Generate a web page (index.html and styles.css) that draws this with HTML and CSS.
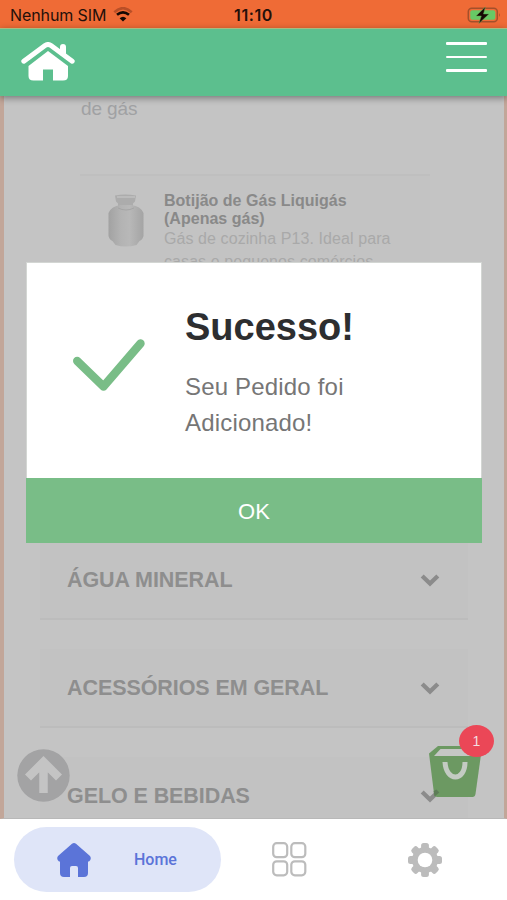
FILE: index.html
```html
<!DOCTYPE html>
<html lang="pt-BR">
<head>
<meta charset="utf-8">
<title>Pedido</title>
<link rel="stylesheet" href="styles.css">
</head>
<body>
<div class="screen">
  <div class="status">
    <div class="carrier"><span>Nenhum SIM</span>
      <svg width="20" height="16" viewBox="0 0 20 16"><path d="M1.300 5.200Q10-2.800 18.700 5.200" fill="none" stroke="#b94f27" stroke-width="2.600"/><path d="M4 7.800Q10 2.800 16 7.800" fill="none" stroke="#160904" stroke-width="2.700"/><path d="M6.600 11.200Q10 8.200 13.400 11.200L10 14.400Z" fill="#160904"/></svg>
    </div>
    <time class="clock">11:10</time>
    <svg class="battery" width="34" height="18" viewBox="0 0 34 18"><rect x="1.300" y="2.300" width="29" height="13.500" rx="3.500" fill="none" stroke="#a3502b" stroke-width="1.500"/><rect x="3.300" y="4.300" width="25" height="9.500" rx="2" fill="#67c965"/><path d="M32 7q1.700 2 0 4z" fill="#a3502b"/><path d="M18.300 1L9 10h5.300l-2.500 7.500L22 8h-5.500z" fill="#160904" stroke="#67a552" stroke-width=".5"/></svg>
  </div>

  <header class="header">
    <svg width="54" height="40" viewBox="0 0 54 40"><path d="M7.500 24v10q0 4.500 5 4.500h9.500V27.500h10v11h10q5 0 5-4.500V24L27 9Z" fill="#fff"/><path d="M2.800 19.200L24 3.500q3-2 6 0L51.200 19.200" fill="none" stroke="#5cbf8e" stroke-width="9"/><path d="M42 11V5" stroke="#fff" stroke-width="6" stroke-linecap="round"/><path d="M2.800 19.200L24 3.500q3-2 6 0L51.200 19.200" fill="none" stroke="#fff" stroke-width="5" stroke-linecap="round"/></svg>
    <div class="burger"><i></i><i></i><i></i></div>
  </header>

  <main class="content">
    <p class="lead">de gás</p>
    <article class="product">
      <svg class="cylinder" width="38" height="54" viewBox="0 0 38 54">
        <defs><linearGradient id="steel"><stop offset="0" stop-color="#a2a2a2"/><stop offset=".35" stop-color="#b3b3b3"/><stop offset=".6" stop-color="#b8b8b8"/><stop offset="1" stop-color="#a4a4a4"/></linearGradient></defs>
        <path d="M8 1.500q10-2 21 0l-1 6-2 2v5H11v-5L9 7.500Z" fill="#acacac"/><path d="M10 3h18" stroke="#bbb" stroke-width="2"/>
        <path d="M1.500 19q3-7 12-8h11q9 1 12 8v23q-1 4-4 5l-3 4q-11 3-21 0l-3-4q-3-1-4-5Z" fill="url(#steel)"/><path d="M11 14q8 4 16 0" fill="none" stroke="#a5a5a5"/>
      </svg>
      <div class="product-text">
        <h3>Botijão de Gás Liquigás<br>(Apenas gás)</h3>
        <p>Gás de cozinha P13. Ideal para<br>casas e pequenos comércios</p>
      </div>
    </article>
    <div class="sections">
      <section class="row"><h2>ÁGUA MINERAL</h2><svg width="20" height="14" viewBox="0 0 20 14"><path d="M2.200 3L10 10.500L17.800 3" fill="none" stroke="#8b8b8b" stroke-width="4.300"/></svg></section>
      <section class="row"><h2>ACESSÓRIOS EM GERAL</h2><svg width="20" height="14" viewBox="0 0 20 14"><path d="M2.200 3L10 10.500L17.800 3" fill="none" stroke="#8b8b8b" stroke-width="4.300"/></svg></section>
      <section class="row"><h2>GELO E BEBIDAS</h2><svg width="20" height="14" viewBox="0 0 20 14"><path d="M2.200 3L10 10.500L17.800 3" fill="none" stroke="#8b8b8b" stroke-width="4.300"/></svg></section>
    </div>

    <div class="dialog">
      <div class="dialog-body">
        <svg width="72" height="53" viewBox="0 0 72 53"><path d="M4.200 22L30.500 47.500L67.500 4.500" fill="none" stroke="#79bd87" stroke-width="8.400" stroke-linecap="round" stroke-linejoin="round"/></svg>
        <div><h1>Sucesso!</h1><p>Seu Pedido foi<br>Adicionado!</p></div>
      </div>
      <div class="ok">OK</div>
    </div>

    <svg class="to-top" width="53" height="53" viewBox="0 0 53 53"><circle cx="26.500" cy="26.500" r="26.200" fill="#a3a3a4"/><path d="M11 28.500L26.500 13L42 28.500M26.500 14V44" fill="none" stroke="#c4c4c4" stroke-width="8.500"/></svg>
    <div class="cart">
      <svg width="54" height="53" viewBox="0 0 54 53"><path d="M1 8.500L10 1H44L53 9.500L47.500 49q-.5 3-3 3H9.500q-3 0-3.400-3Z" fill="#6c9962"/><path d="M6 11L12.500 4H42L49 11Z" fill="#c5c7c4"/><path d="M17 17C18 37 37 37 37 17" fill="none" stroke="#c3cbc2" stroke-width="5"/><path d="M6.100 49L5.600 46L8.500 44.500L11.300 47.500L6.600 51.500Z" fill="#5d7c57"/></svg>
      <span class="badge">1</span>
    </div>
  </main>

  <nav class="tabs">
    <div class="tab active">
      <svg width="34" height="34" viewBox="0 0 34 34"><path d="M15 .8q2-1.600 4 0L33 13q2 3-1 5.500h-1V30q0 4-4 4h-6V25q0-2-2-2h-4q-2 0-2 2v9H7q-4 0-4-4V18.500H2Q-1 16 1 13Z" fill="#5b74d8"/></svg>
      <span>Home</span>
    </div>
    <div class="tab">
      <svg width="35" height="35" viewBox="0 0 35 35" fill="none" stroke="#bcbcbc" stroke-width="2.200"><rect x="1.200" y="1.200" width="14" height="14" rx="3.500"/><rect x="19.300" y="1.200" width="14" height="14" rx="3.500"/><rect x="1.200" y="19.300" width="14" height="14" rx="3.500"/><rect x="19.300" y="19.300" width="14" height="14" rx="3.500"/></svg>
    </div>
    <div class="tab">
      <svg width="34" height="34" viewBox="-17 -17 34 34" fill="#bcbcbc"><g id="teeth"><rect x="-3.900" y="-17" width="7.800" height="34" rx="2.500"/><rect x="-17" y="-3.900" width="34" height="7.800" rx="2.500"/></g><use href="#teeth" transform="rotate(45)"/><circle r="13"/><circle r="7.300" fill="#fff"/></svg>
    </div>
  </nav>
</div>
</body>
</html>
```
FILE: styles.css
```css
* { box-sizing: border-box; margin: 0; padding: 0; }
body { font-family: "Liberation Sans", Arial, sans-serif; }
svg { display: block; flex: none; }
.screen { width: 507px; height: 900px; display: flex; flex-direction: column; overflow: hidden; background: #fff; }

.status { height: 28px; flex: none; display: grid; grid-template-columns: 1fr auto 1fr; align-items: center; padding: 2px 6px 0 10px; background: #ef6b36; color: #24100a; font-family: Inter, sans-serif; font-size: 16px; }
.carrier { display: flex; align-items: center; gap: 7px; letter-spacing: -.1px; }
.clock { font-weight: 600; letter-spacing: .6px; margin-right: 4px; }
.battery { justify-self: end; }

.header { height: 68px; flex: none; display: flex; justify-content: space-between; align-items: flex-start; padding: 13px 20px 0 21px; background: #5cbf8e; border-top: 1px solid #a8ba80; position: relative; z-index: 2; box-shadow: 0 2px 7px rgba(0,0,0,.4); }
.burger { width: 41px; display: flex; flex-direction: column; gap: 11px; }
.burger i { height: 2.500px; background: #fff; border-radius: 1px; }

.content { position: relative; height: 723px; flex: none; display: flex; flex-direction: column; background: #c4c4c4; border-left: 4px solid #c2a699; border-right: 3px solid #c2a699; overflow: hidden; border-bottom: 1px solid #b8b8b8; }
.lead { margin: 1px 0 0 77px; font-size: 19px; line-height: 24px; height: 22px; flex: none; color: #a0a1a3; letter-spacing: -.1px; }
.product { width: 350px; height: 190px; flex: none; margin: 55px 0 0 76px; border-top: 2px solid #bfbfbf; display: flex; align-items: flex-start; padding: 16px 0 0 27px; gap: 19px; background: #c3c3c3; }
.cylinder { margin-top: 2px; }
.product h3 { font-size: 16px; line-height: 17.500px; color: #898989; white-space: nowrap; letter-spacing: .02px; }
.product p { margin-top: 1px; font-size: 16px; line-height: 22.500px; color: #a9a9a9; white-space: nowrap; letter-spacing: .08px; }
.sections { display: flex; flex: none; flex-direction: column; gap: 29px; margin: 177px 36px 0; }
.row { height: 79px; flex: none; display: flex; align-items: center; justify-content: space-between; padding: 0 28px 0 27px; background: #c2c2c2; border-bottom: 2px solid #bcbcbc; }
.row h2 { font-size: 21.500px; line-height: 24px; color: #8e8e8e; white-space: nowrap; letter-spacing: -.08px; }

.dialog { position: absolute; left: 22px; top: 166px; width: 456px; height: 281px; background: #fff; border: 1px solid #d3d6d3; display: flex; flex-direction: column; }
.dialog-body { flex: 1; display: flex; align-items: flex-start; padding: 42px 0 0 46px; gap: 40px; }
.dialog-body svg { margin-top: 34px; }
.dialog h1 { font-size: 38px; line-height: 44px; color: #2d2e30; }
.dialog p { margin-top: 20px; font-size: 24px; line-height: 36px; color: #767676; letter-spacing: .18px; }
.ok { height: 65px; margin: 0 -1px -1px; background: #79bd87; color: #fff; font-size: 22px; line-height: 67px; text-align: center; }

.to-top { position: absolute; left: 13px; top: 653px; }
.cart { position: absolute; left: 424px; top: 649px; }
.badge { position: absolute; left: 31px; top: -20px; width: 35px; height: 32px; border-radius: 50%; background: #eb4757; color: #f3dfe0; font-size: 14px; line-height: 32px; text-align: center; }

.tabs { flex: 1; display: flex; align-items: flex-start; padding: 8px 14px 0; }
.tab { flex: 1; height: 65px; display: flex; align-items: center; justify-content: center; }
.tab.active { flex: none; width: 207px; border-radius: 33px; background: #dfe5f8; justify-content: flex-start; padding-left: 43px; gap: 43px; color: #5b74d8; font: 500 16px Roboto, sans-serif; }
```
